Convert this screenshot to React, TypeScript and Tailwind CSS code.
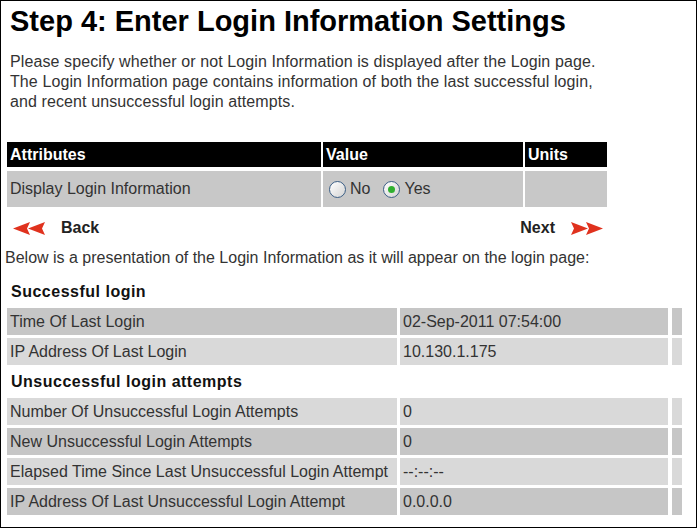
const rows1 = [
  { label: "Time Of Last Login", value: "02-Sep-2011 07:54:00", dark: true },
  { label: "IP Address Of Last Login", value: "10.130.1.175", dark: false },
];

const rows2 = [
  { label: "Number Of Unsuccessful Login Attempts", value: "0", dark: false },
  { label: "New Unsuccessful Login Attempts", value: "0", dark: true },
  { label: "Elapsed Time Since Last Unsuccessful Login Attempt", value: "--:--:--", dark: false },
  { label: "IP Address Of Last Unsuccessful Login Attempt", value: "0.0.0.0", dark: true },
];

const Arrows = ({ flip }: { flip?: boolean }) => (
  <svg width="34" height="13" viewBox="0 0 34 13" className={flip ? "-scale-x-100" : ""}>
    <path d="M0 6.5 L17 0 L14 6.5 L17 13 Z" fill="#e0321e" />
    <path d="M15 6.5 L32 0 L29 6.5 L32 13 Z" fill="#e0321e" />
  </svg>
);

const Radio = ({ checked }: { checked?: boolean }) => (
  <span className="w-[17px] h-[17px] rounded-full border border-[#3c5f86] bg-gradient-to-br from-[#ffffff] to-[#d4d4d4] flex items-center justify-center">
    {checked && <span className="w-[7px] h-[7px] rounded-full bg-[#2fb02f]" />}
  </span>
);

const DataRows = ({ rows }: { rows: { label: string; value: string; dark: boolean }[] }) => (
  <div className="flex flex-col gap-[3px] ml-[6px]">
    {rows.map((r) => (
      <div key={r.label} className="flex h-[27px] text-[16px] text-[#333]">
        <div className={`w-[390px] flex items-center pl-[3px] whitespace-nowrap ${r.dark ? "bg-[#c6c6c6]" : "bg-[#d9d9d9]"}`}>
          {r.label}
        </div>
        <div className={`w-[268px] ml-[3px] flex items-center pl-[3px] ${r.dark ? "bg-[#c6c6c6]" : "bg-[#d9d9d9]"}`}>
          {r.value}
        </div>
        <div className={`w-[10px] ml-[4px] ${r.dark ? "bg-[#c6c6c6]" : "bg-[#d9d9d9]"}`} />
      </div>
    ))}
  </div>
);

const App = () => {
  return (
    <div className="w-[697px] h-[528px] bg-white border border-black font-['Liberation_Sans',Arial,sans-serif] text-[#333] overflow-hidden">
      <h1 className="text-[29px] font-bold leading-[32px] text-black mt-[4px] ml-[9px] whitespace-nowrap">
        Step 4: Enter Login Information Settings
      </h1>
      <p className="text-[16px] leading-[20px] tracking-[0.1px] mt-[15px] ml-[9px] whitespace-nowrap">
        Please specify whether or not Login Information is displayed after the Login page.
        <br />
        The Login Information page contains information of both the last successful login,
        <br />
        and recent unsuccessful login attempts.
      </p>

      <div className="ml-[6px] mt-[30px] grid grid-cols-[314px_200px_82px] gap-x-[2px] gap-y-[4px] w-[600px]">
        <div className="h-[25px] bg-black text-white font-bold text-[16px] flex items-center pl-[3px]">Attributes</div>
        <div className="h-[25px] bg-black text-white font-bold text-[16px] flex items-center pl-[3px]">Value</div>
        <div className="h-[25px] bg-black text-white font-bold text-[16px] flex items-center pl-[3px]">Units</div>
        <div className="h-[36px] bg-[#c8c8c8] text-[16px] flex items-center pl-[3px]">Display Login Information</div>
        <div className="h-[36px] bg-[#c8c8c8] text-[16px] flex items-center pl-[6px]">
          <Radio />
          <span className="ml-[4px] mr-[13px]">No</span>
          <Radio checked />
          <span className="ml-[4px]">Yes</span>
        </div>
        <div className="h-[36px] bg-[#c8c8c8]" />
      </div>

      <div className="flex items-center justify-between h-[20px] mt-[11px] ml-[12px] w-[590px] text-[16px] font-bold text-[#222]">
        <div className="flex items-center">
          <Arrows />
          <span className="ml-[14px]">Back</span>
        </div>
        <div className="flex items-center">
          <span className="mr-[14px]">Next</span>
          <Arrows flip />
        </div>
      </div>

      <p className="text-[16px] leading-[20px] mt-[10px] ml-[4px] whitespace-nowrap">
        Below is a presentation of the Login Information as it will appear on the login page:
      </p>

      <div className="text-[16px] font-bold leading-[20px] tracking-[0.5px] text-[#111] mt-[14px] ml-[10px]">Successful login</div>
      <div className="mt-[6px]">
        <DataRows rows={rows1} />
      </div>

      <div className="text-[16px] font-bold leading-[20px] tracking-[0.5px] text-[#111] mt-[7px] ml-[10px]">Unsuccessful login attempts</div>
      <div className="mt-[6px]">
        <DataRows rows={rows2} />
      </div>
    </div>
  );
};

export default App;
